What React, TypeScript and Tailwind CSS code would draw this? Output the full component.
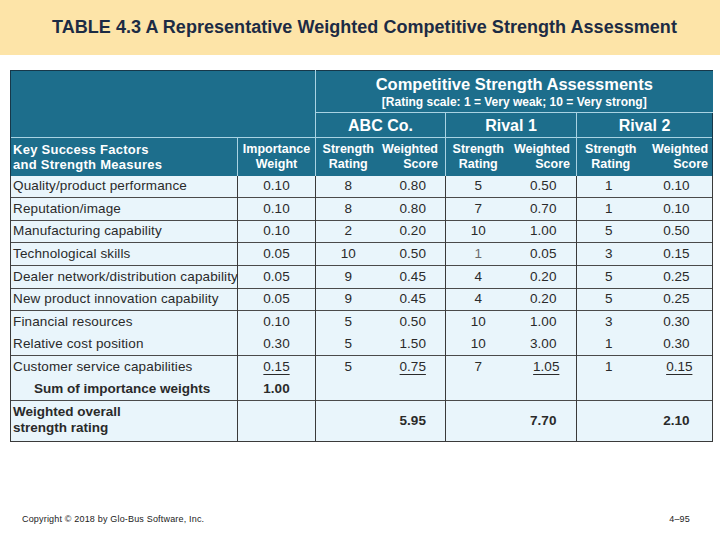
import React from "react";

type Row = {
  factor: string;
  weight: string;
  abc: [string, string];
  r1: [string, string];
  r2: [string, string];
  h: string;
  line: boolean;
};

const ROWS: Row[] = [
  { factor: "Quality/product performance", weight: "0.10", abc: ["8", "0.80"], r1: ["5", "0.50"], r2: ["1", "0.10"], h: "h-[22px]", line: true },
  { factor: "Reputation/image", weight: "0.10", abc: ["8", "0.80"], r1: ["7", "0.70"], r2: ["1", "0.10"], h: "h-[23px]", line: true },
  { factor: "Manufacturing capability", weight: "0.10", abc: ["2", "0.20"], r1: ["10", "1.00"], r2: ["5", "0.50"], h: "h-[22px]", line: true },
  { factor: "Technological skills", weight: "0.05", abc: ["10", "0.50"], r1: ["1", "0.05"], r2: ["3", "0.15"], h: "h-[23px]", line: true },
  { factor: "Dealer network/distribution capability", weight: "0.05", abc: ["9", "0.45"], r1: ["4", "0.20"], r2: ["5", "0.25"], h: "h-[23px]", line: true },
  { factor: "New product innovation capability", weight: "0.05", abc: ["9", "0.45"], r1: ["4", "0.20"], r2: ["5", "0.25"], h: "h-[22px]", line: true },
  { factor: "Financial resources", weight: "0.10", abc: ["5", "0.50"], r1: ["10", "1.00"], r2: ["3", "0.30"], h: "h-[23px]", line: false },
  { factor: "Relative cost position", weight: "0.30", abc: ["5", "1.50"], r1: ["10", "3.00"], r2: ["1", "0.30"], h: "h-[22px]", line: true },
];

const hdr = "border-l border-[#a9d3e3] text-white font-bold text-[12.5px] leading-[15px]";
const cell = "border-l border-[#3a3a3a] text-center";

export default function App() {
  return (
    <div className="w-[720px] h-[540px] bg-white flex flex-col text-[#2a2a2a]" style={{ fontFamily: '"Liberation Sans", Arial, sans-serif' }}>
      <div className="h-[55px] bg-[#fde4a8] flex items-center justify-center pl-[9px]">
        <h1 className="text-[18px] font-bold text-[#1c2b44] tracking-[0.002em]">
          TABLE 4.3 A Representative Weighted Competitive Strength Assessment
        </h1>
      </div>

      <div className="pt-[15px] pl-[10px]">
        <table className="table-fixed border-collapse w-[702px] text-[13.5px]">
          <colgroup>
            <col className="w-[227px]" />
            <col className="w-[78px]" />
            <col className="w-[65px]" />
            <col className="w-[65px]" />
            <col className="w-[65px]" />
            <col className="w-[66px]" />
            <col className="w-[68px]" />
            <col className="w-[68px]" />
          </colgroup>
          <thead className="bg-[#1d6e8c]">
            <tr className="h-[42px] border-t border-[#17384a]">
              <th colSpan={2} rowSpan={2} className="border-l border-[#17384a]" />
              <th colSpan={6} className={`${hdr} border-b pt-[2px] align-middle`}>
                <div className="text-[16.5px] leading-[19px]">Competitive Strength Assessments</div>
                <div className="text-[12px] leading-[16px]">[Rating scale: 1 = Very weak; 10 = Very strong]</div>
              </th>
            </tr>
            <tr className="h-[25px]">
              <th colSpan={2} className={`${hdr} text-[16px]`}>ABC Co.</th>
              <th colSpan={2} className={`${hdr} text-[16px]`}>Rival 1</th>
              <th colSpan={2} className={`${hdr} text-[16px] border-r border-r-[#17384a]`}>Rival 2</th>
            </tr>
            <tr className="h-[38px] border-t border-[#a9d3e3]">
              <th className="border-l border-[#17384a] text-left pl-[2px] text-white font-bold text-[13px] tracking-[0.02em] leading-[15px]">
                Key Success Factors
                <br />
                and Strength Measures
              </th>
              <th className={hdr}>
                Importance
                <br />
                Weight
              </th>
              <th className={hdr}>
                Strength
                <br />
                Rating
              </th>
              <th className="text-white font-bold text-[12.5px] leading-[15px] text-right pr-[7px]">
                Weighted
                <br />
                Score
              </th>
              <th className={hdr}>
                Strength
                <br />
                Rating
              </th>
              <th className="text-white font-bold text-[12.5px] leading-[15px] text-right pr-[6px]">
                Weighted
                <br />
                Score
              </th>
              <th className={hdr}>
                Strength
                <br />
                Rating
              </th>
              <th className="text-white font-bold text-[12.5px] leading-[15px] text-right pr-[4px] border-r border-[#17384a]">
                Weighted
                <br />
                Score
              </th>
            </tr>
          </thead>
          <tbody className="bg-[#e9f5fb]">
            {ROWS.map((r) => (
              <tr key={r.factor} className={`${r.h} ${r.line ? "border-b border-[#4a4a4a]" : ""}`}>
                <td className="border-l border-[#3a3a3a] pl-[2px] whitespace-nowrap tracking-[0.01em]">{r.factor}</td>
                <td className={cell}>{r.weight}</td>
                <td className={cell}>{r.abc[0]}</td>
                <td className="text-center">{r.abc[1]}</td>
                <td className={`${cell} ${r.r1[0] === "1" ? "text-[#6b6b6b]" : ""}`}>{r.r1[0]}</td>
                <td className="text-center">{r.r1[1]}</td>
                <td className={`${cell} pr-[4px]`}>{r.r2[0]}</td>
                <td className="text-center pr-[4px] border-r border-[#3a3a3a]">{r.r2[1]}</td>
              </tr>
            ))}
            <tr className="h-[23px]">
              <td className="border-l border-[#3a3a3a] pl-[2px] whitespace-nowrap tracking-[0.01em]">Customer service capabilities</td>
              <td className={cell}>
                <span className="underline underline-offset-[3px]">0.15</span>
              </td>
              <td className={cell}>5</td>
              <td className="text-center">
                <span className="underline underline-offset-[3px]">0.75</span>
              </td>
              <td className={cell}>7</td>
              <td className="text-center">
                <span className="underline underline-offset-[3px] pl-[6px]">1.05</span>
              </td>
              <td className={`${cell} pr-[4px]`}>1</td>
              <td className="text-center pr-[4px] border-r border-[#3a3a3a]">
                <span className="underline underline-offset-[3px] pl-[6px]">0.15</span>
              </td>
            </tr>
            <tr className="h-[22px] border-b border-[#4a4a4a]">
              <td className="border-l border-[#3a3a3a] pl-[23px] font-bold whitespace-nowrap">Sum of importance weights</td>
              <td className={`${cell} font-bold`}>1.00</td>
              <td className={cell} />
              <td />
              <td className={cell} />
              <td />
              <td className={cell} />
              <td className="border-r border-[#3a3a3a]" />
            </tr>
            <tr className="h-[41px] border-b border-[#3a3a3a]">
              <td className="border-l border-[#3a3a3a] pl-[2px] font-bold leading-[16px] pb-[3px]">
                Weighted overall
                <br />
                strength rating
              </td>
              <td className={cell} />
              <td className={cell} />
              <td className="text-center font-bold">5.95</td>
              <td className={cell} />
              <td className="text-center font-bold">7.70</td>
              <td className={cell} />
              <td className="text-center pr-[4px] font-bold border-r border-[#3a3a3a]">2.10</td>
            </tr>
          </tbody>
        </table>
      </div>

      <div className="mt-auto mb-[14px] flex justify-between pl-[22px] pr-[30px] text-[9px] text-[#222] tracking-[0.02em]">
        <span>Copyright © 2018 by Glo-Bus Software, Inc.</span>
        <span>4–95</span>
      </div>
    </div>
  );
}
